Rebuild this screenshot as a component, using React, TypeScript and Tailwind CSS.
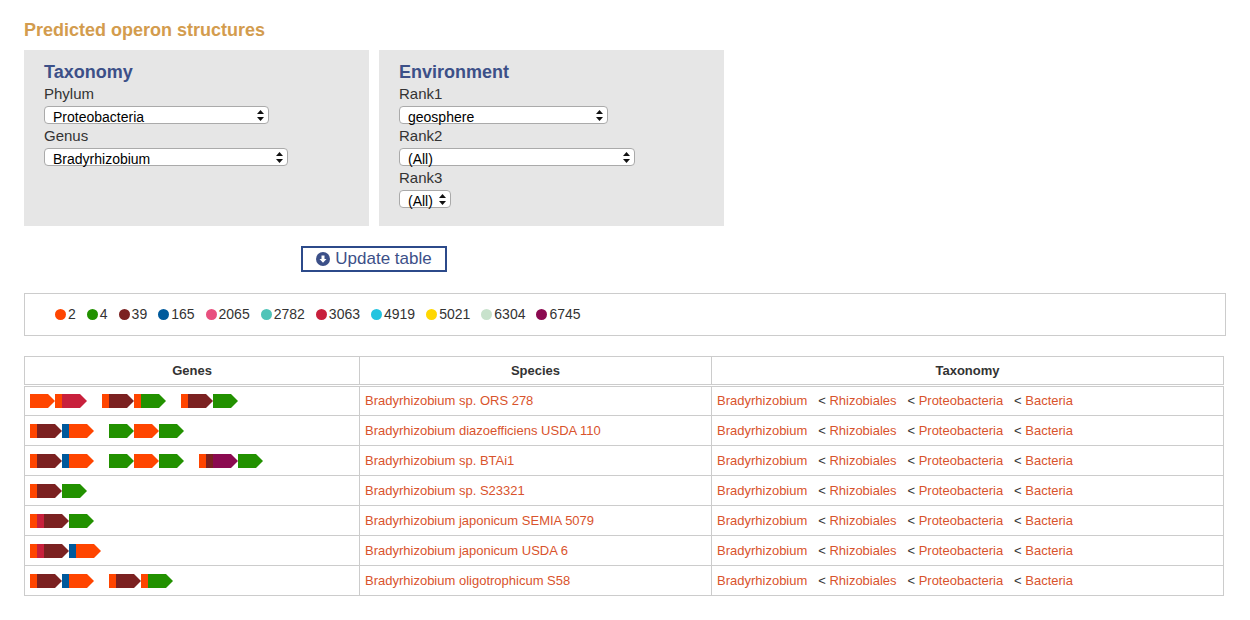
import React from 'react'

type Seg = { c: string; w: number; a?: boolean }

const O = '#ff4500'
const G = '#229100'
const B = '#7b2121'
const L = '#005a9c'
const C = '#c8203c'
const P = '#8b0a50'

const o7: Seg = { c: O, w: 7 }
const oA: Seg = { c: O, w: 25, a: true }
const gA: Seg = { c: G, w: 25, a: true }
const bA: Seg = { c: B, w: 25, a: true }
const l7: Seg = { c: L, w: 7 }
const c7: Seg = { c: C, w: 7 }

const rows: { genes: Seg[][]; species: string }[] = [
  { genes: [[oA, o7, { c: C, w: 25, a: true }], [o7, bA, o7, gA], [o7, bA, gA]], species: 'Bradyrhizobium sp. ORS 278' },
  { genes: [[o7, bA, l7, oA], [gA, oA, gA]], species: 'Bradyrhizobium diazoefficiens USDA 110' },
  { genes: [[o7, bA, l7, oA], [gA, oA, gA], [o7, { c: B, w: 7 }, { c: P, w: 25, a: true }, gA]], species: 'Bradyrhizobium sp. BTAi1' },
  { genes: [[o7, bA, gA]], species: 'Bradyrhizobium sp. S23321' },
  { genes: [[o7, c7, bA, gA]], species: 'Bradyrhizobium japonicum SEMIA 5079' },
  { genes: [[o7, c7, bA, l7, oA]], species: 'Bradyrhizobium japonicum USDA 6' },
  { genes: [[o7, bA, l7, oA], [o7, bA, o7, gA]], species: 'Bradyrhizobium oligotrophicum S58' },
]

const legend: [string, string][] = [
  ['2', O], ['4', G], ['39', B], ['165', L], ['2065', '#e8507e'], ['2782', '#50c4b8'],
  ['3063', C], ['4919', '#22c4e0'], ['5021', '#ffd700'], ['6304', '#c8e2cc'], ['6745', P],
]

function Piece({ s }: { s: Seg }) {
  const pts = s.a ? `0,0 ${s.w - 7},0 ${s.w},7 ${s.w - 7},14 0,14` : `0,0 ${s.w},0 ${s.w},14 0,14`
  return (
    <svg width={s.w} height={14} className="block">
      <polygon points={pts} fill={s.c} />
    </svg>
  )
}

function Select({ value, width }: { value: string; width: string }) {
  return (
    <div className={`${width} h-[18px] bg-white border border-[#aaa] rounded-[4px] flex items-center justify-between pl-2 pr-1 text-[14px] leading-none text-black`}>
      <span className="pt-[3px]">{value}</span>
      <svg width="7" height="11" viewBox="0 0 7 11">
        <polygon points="3.5,0 7,4 0,4" fill="#111" />
        <polygon points="0,7 7,7 3.5,11" fill="#111" />
      </svg>
    </div>
  )
}

export default function App() {
  return (
    <div className="bg-white w-[1250px] h-[620px] px-6 pt-[19px] text-[#333]" style={{ fontFamily: '"Helvetica Neue", "Liberation Sans", Arial, sans-serif' }}>
      <h1 className="text-[18px] font-bold text-[#d39c4e] leading-[22px]">Predicted operon structures</h1>
      <div className="flex gap-[10px] mt-[9px]">
        <div className="w-[345px] h-[176px] bg-[#e6e6e6] px-5 pt-3">
          <h2 className="text-[18px] font-bold text-[#3c5088] leading-[20px]">Taxonomy</h2>
          <div className="text-[15px] leading-[20px] mt-[2px]">Phylum</div>
          <div className="mt-[2px]"><Select value="Proteobacteria" width="w-[225px]" /></div>
          <div className="text-[15px] leading-[20px] mt-[2px]">Genus</div>
          <div className="mt-[2px]"><Select value="Bradyrhizobium" width="w-[244px]" /></div>
        </div>
        <div className="w-[345px] h-[176px] bg-[#e6e6e6] px-5 pt-3">
          <h2 className="text-[18px] font-bold text-[#3c5088] leading-[20px]">Environment</h2>
          <div className="text-[15px] leading-[20px] mt-[2px]">Rank1</div>
          <div className="mt-[2px]"><Select value="geosphere" width="w-[209px]" /></div>
          <div className="text-[15px] leading-[20px] mt-[2px]">Rank2</div>
          <div className="mt-[2px]"><Select value="(All)" width="w-[236px]" /></div>
          <div className="text-[15px] leading-[20px] mt-[2px]">Rank3</div>
          <div className="mt-[2px]"><Select value="(All)" width="w-[52px]" /></div>
        </div>
      </div>
      <div className="mt-5 ml-[277px] w-[146px] h-[26px] border-2 border-[#2c4a8a] flex items-center justify-center gap-[5px] text-[17px] text-[#3c5088]">
        <svg width="14" height="14" viewBox="0 0 14 14">
          <circle cx="7" cy="7" r="7" fill="#3c5088" />
          <path d="M5.5 3.5h3v3.5h2L7 10.8 3.5 7h2z" fill="#fff" />
        </svg>
        Update table
      </div>
      <div className="mt-[21px] h-[43px] border border-[#ccc] flex items-center pl-[30px] gap-[11px] text-[14px]">
        {legend.map(([n, c]) => (
          <div key={n} className="flex items-center gap-[2px]">
            <span className="w-[11px] h-[11px] rounded-full" style={{ background: c }} />
            {n}
          </div>
        ))}
      </div>
      <table className="mt-5 w-[1200px] border-collapse text-[13px] table-fixed">
        <colgroup>
          <col className="w-[335px]" />
          <col className="w-[352px]" />
          <col />
        </colgroup>
        <thead>
          <tr className="h-[29px] border-b-[3px] border-double border-[#ccc]">
            {['Genes', 'Species', 'Taxonomy'].map(h => (
              <th key={h} className="border border-[#ccc] font-bold text-[13px] text-[#333]">{h}</th>
            ))}
          </tr>
        </thead>
        <tbody>
          {rows.map(r => (
            <tr key={r.species} className="h-[30px]">
              <td className="border border-[#ccc] px-[5px]">
                <div className="flex gap-[15px]">
                  {r.genes.map((g, i) => (
                    <div key={i} className="flex">
                      {g.map((s, j) => <Piece key={j} s={s} />)}
                    </div>
                  ))}
                </div>
              </td>
              <td className="border border-[#ccc] px-[5px] text-[#d9532c]">{r.species}</td>
              <td className="border border-[#ccc] px-[5px] text-[#d9532c]">
                Bradyrhizobium<span className="text-[#333]">&nbsp;&nbsp; &lt; </span>Rhizobiales<span className="text-[#333]">&nbsp;&nbsp; &lt; </span>Proteobacteria<span className="text-[#333]">&nbsp;&nbsp; &lt; </span>Bacteria
              </td>
            </tr>
          ))}
        </tbody>
      </table>
    </div>
  )
}
